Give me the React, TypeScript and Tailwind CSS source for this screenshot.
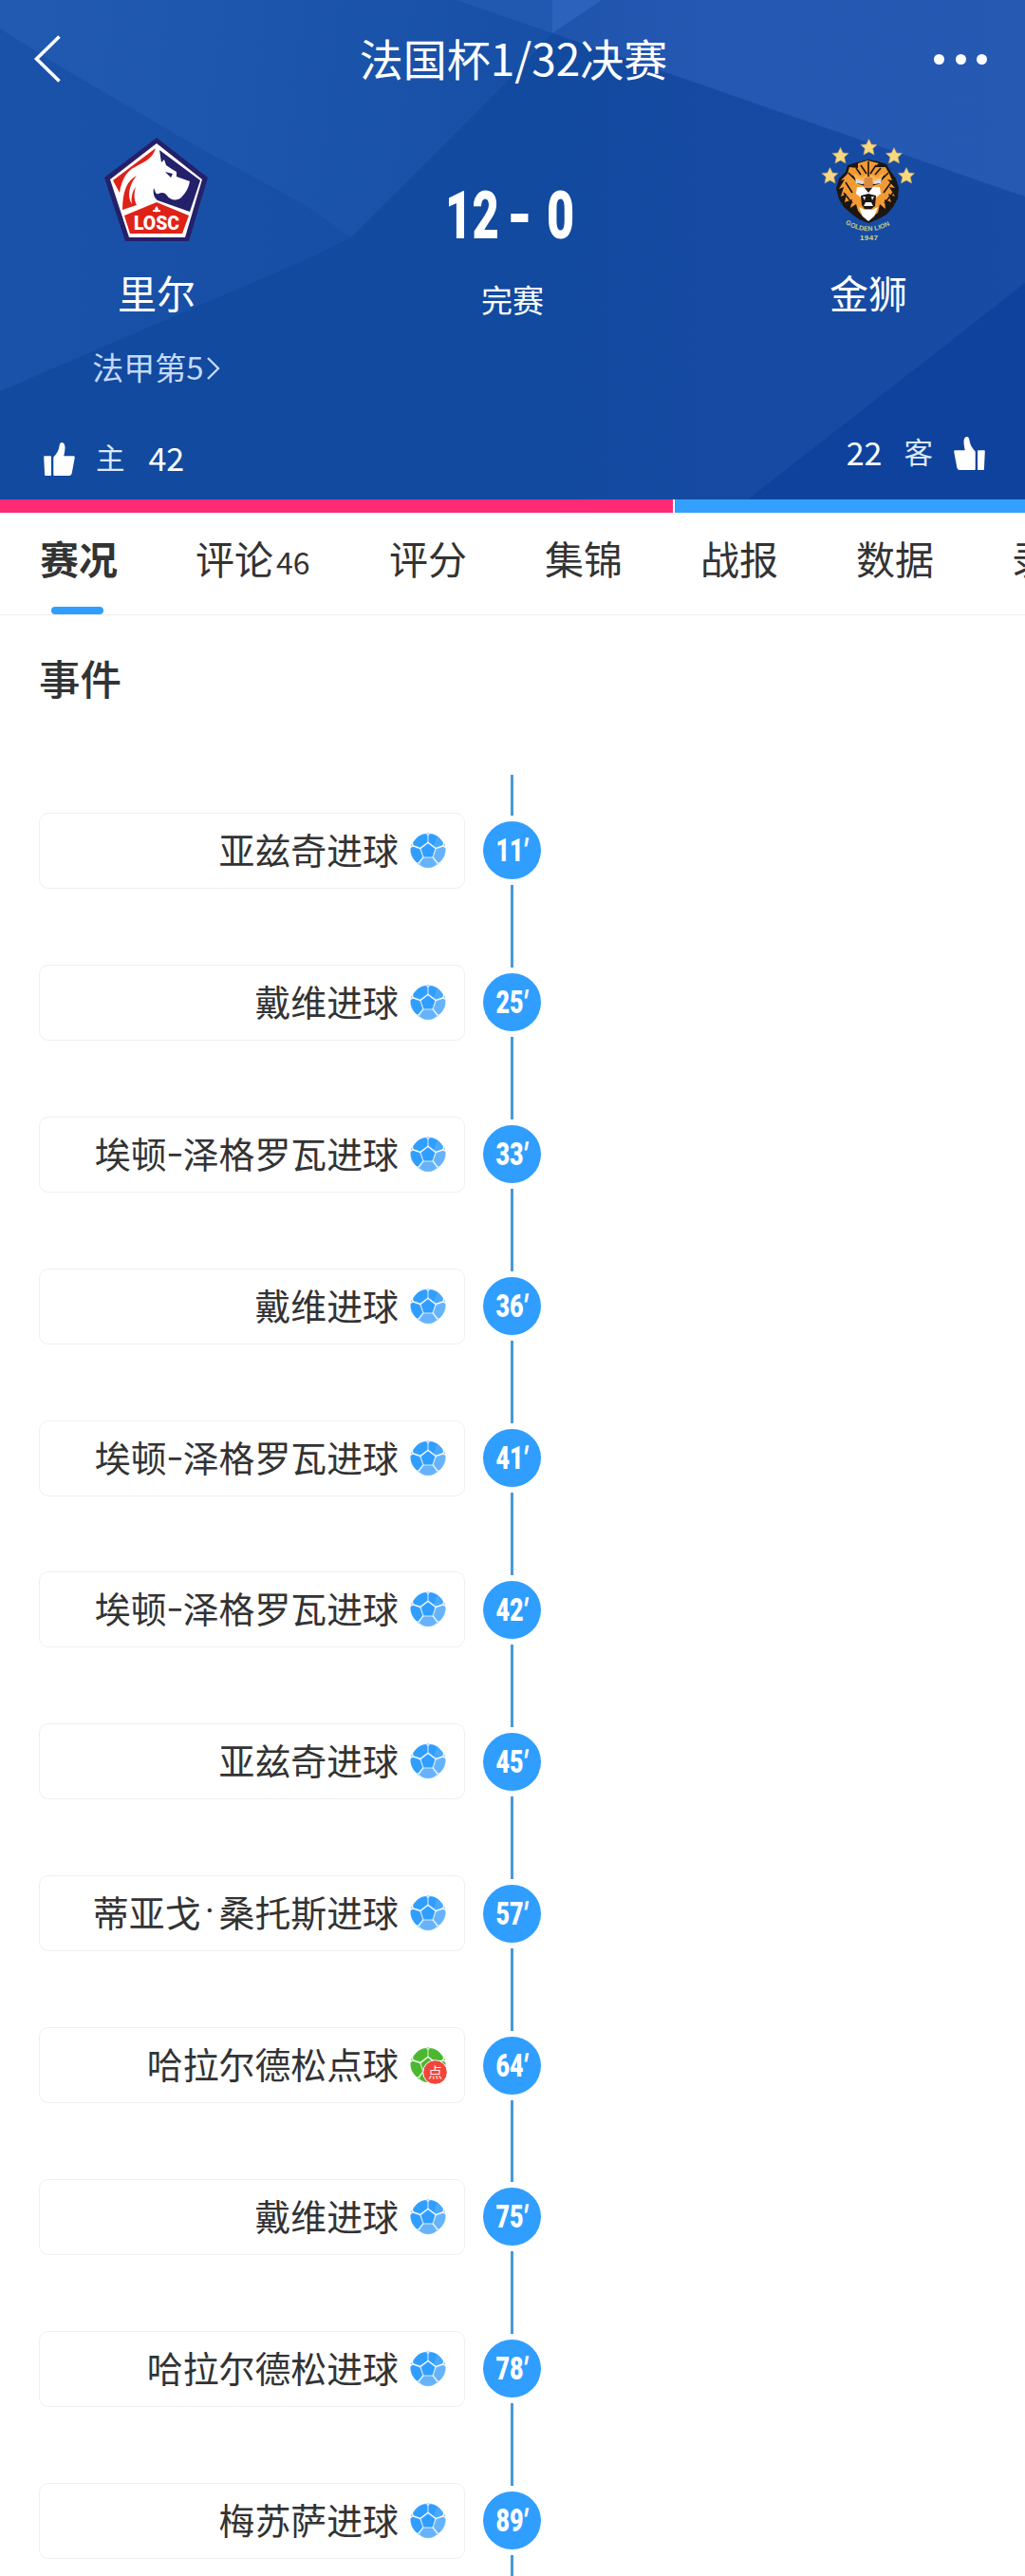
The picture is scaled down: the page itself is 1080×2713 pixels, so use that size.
import React from 'react';

interface MatchEvent {
  minute: number;
  text: string;
  penalty?: boolean;
}

const events: MatchEvent[] = [
  { minute: 11, text: '亚兹奇进球' },
  { minute: 25, text: '戴维进球' },
  { minute: 33, text: '埃顿-泽格罗瓦进球' },
  { minute: 36, text: '戴维进球' },
  { minute: 41, text: '埃顿-泽格罗瓦进球' },
  { minute: 42, text: '埃顿-泽格罗瓦进球' },
  { minute: 45, text: '亚兹奇进球' },
  { minute: 57, text: '蒂亚戈·桑托斯进球' },
  { minute: 64, text: '哈拉尔德松点球', penalty: true },
  { minute: 75, text: '戴维进球' },
  { minute: 78, text: '哈拉尔德松进球' },
  { minute: 89, text: '梅苏萨进球' },
];

const tabs = [
  { label: '赛况', active: true },
  { label: '评论', count: 46 },
  { label: '评分' },
  { label: '集锦' },
  { label: '战报' },
  { label: '数据' },
  { label: '录像' },
];

const HeaderBackdrop: React.FC = () => (
  <svg className="absolute inset-0 h-full w-full" viewBox="0 0 1080 526" preserveAspectRatio="none">
    <defs>
      <linearGradient id="left" gradientUnits="userSpaceOnUse" x1="0" y1="200" x2="540" y2="200">
        <stop offset="0" stopColor="#1a52a9" />
        <stop offset="0.6" stopColor="#184fa6" />
        <stop offset="1" stopColor="#164ea4" />
      </linearGradient>
      <linearGradient id="ray" gradientUnits="userSpaceOnUse" x1="0" y1="0" x2="520" y2="60">
        <stop offset="0" stopColor="#225ab1" />
        <stop offset="0.5" stopColor="#1d56ad" />
        <stop offset="1" stopColor="#1750a6" />
      </linearGradient>
      <linearGradient id="right" x1="0" y1="0" x2="1" y2="0">
        <stop offset="0" stopColor="#1f54ad" />
        <stop offset="0.4" stopColor="#2558b2" />
        <stop offset="1" stopColor="#2659b2" />
      </linearGradient>
      <linearGradient id="mid" x1="0" y1="0" x2="1" y2="0">
        <stop offset="0" stopColor="#114a9f" />
        <stop offset="0.3" stopColor="#164aa2" />
        <stop offset="1" stopColor="#174ba4" />
      </linearGradient>
    </defs>
    <rect width="1080" height="526" fill="#114a9f" />
    <path d="M0 0H582V35L530 90L370 250L330 270L0 412Z" fill="url(#left)" />
    <path d="M0 0H480L582 35L530 90L370 250L320 215L200 150L60 68L0 30Z" fill="url(#ray)" />
    <path d="M582 35L1080 205V300L790 526H570Z" fill="url(#mid)" />
    <path d="M1080 298V526H788Z" fill="#0f429c" />
    <path d="M582 35L632 0H1080V207Z" fill="url(#right)" />
    <path d="M480 0H582V35Z" fill="#2159b0" />
    <path d="M582 0H634L582 35Z" fill="#2d62bc" />
  </svg>
);

const LoscCrest: React.FC = () => (
  <svg className="h-[114px] w-[112px]" viewBox="109 144 112 114">
    <path d="M165 145L219 187L199 254H132L110 187Z" fill="#24206a" />
    <path d="M165 151L213 189L195 250H136L116 189Z" fill="#fff" />
    <path d="M164 156C161 168 150 171 142 176C132 181 128 191 126 203L119 190Z" fill="#df2218" />
    <path d="M144 185C134 190 129 201 129 221L144 216C141 210 141 204 143 197C139 202 138 209 139 215C133 206 137 193 144 185Z" fill="#df2218" />
    <path d="M168 158L211 190L200 223L166 211C162 208 161 203 162 198C164 202 164 205 167 204C171 202 174 203 176 206C179 211 187 212 191 208C196 203 199 197 200 191L186 186V181C181 178 178 176 175 174L173 168L170 171Z" fill="#24206a" />
    <path d="M174 181L182 183L180 187Z" fill="#24206a" />
    <path d="M131 227L165 213L199 227L192 246H137Z" fill="#df2218" />
    <path d="M165 217L167 220L165 224L163 220ZM161 221H169V223H161Z" fill="#fff" />
    <text x="165" y="242" textAnchor="middle" textLength="48" lengthAdjust="spacingAndGlyphs" className="fill-white font-['Roboto'] text-[20px] font-black">LOSC</text>
  </svg>
);

const STAR = 'M0-8.6L2.7-3L8.6-2.6L4.2 1.5L5.6 8L0 4.9L-5.6 8L-4.2 1.5L-8.6-2.6L-2.7-3Z';

const stars: [number, number][] = [
  [874.5, 185],
  [885.5, 164],
  [915.5, 155],
  [942, 164],
  [955, 185],
];

const LionCrest: React.FC = () => (
  <svg className="h-[114px] w-[112px]" viewBox="859 144 112 114">
    {stars.map(([x, y]) => (
      <path key={x} d={STAR} transform={`translate(${x} ${y})`} fill="#fbd77d" stroke="#b3a169" strokeWidth="0.6" />
    ))}
    <path d="M915 168L925 170L934 173L938 180L944 188L947 198L946 209L941 218L934 226L925 231L915 235L905 231L897 225L889 218L884 210L881 199L884 188L891 181L893 174L903 171Z" fill="#1c1613" />
    <path d="M904 172L914 169L926 172L921 176L933 176L937 183L940 190L935 189L943 198L937 197L943 207L936 204L939 213L932 210L933 220L927 215L925 224L920 228H909L904 222L902 215L896 219L898 210L890 213L892 204L886 207L889 197L884 199L890 189L886 190L893 183L895 176L904 177Z" fill="#f29a33" />
    <path d="M900 183L908 187L913 184L915 189L918 184L924 187L931 182L928 194L922 197H907L901 193Z" fill="#ffb350" />
    <path d="M898 185L904 193L911 195M932 185L926 193L919 195M907 174L913 183M923 174L917 183M915 170V186M891 192L898 203M939 192L931 203M889 203L898 214M941 203L932 214M902 177L907 184M928 177L922 184M894 182L900 188M936 182L930 188" fill="none" stroke="#1c1613" strokeWidth="1.6" />
    <path d="M901 188L910 191L909 194L902 193ZM929 188L920 191L921 194L928 193Z" fill="#d9dde2" />
    <path d="M911 187H919L920 198L915 203L910 198Z" fill="#d98a45" />
    <path d="M903 197L910 197L915 201L920 197L927 197L928 204L923 208H907L902 204Z" fill="#fff" />
    <path d="M911 198H919L915 203Z" fill="#2b211c" />
    <path d="M907 206L915 204L923 206L922 217L918 220H911L908 216Z" fill="#1c1613" />
    <path d="M909 207L911 211L912 207ZM921 207L919 211L918 207ZM910 217L912 213L918 213L920 217Z" fill="#f4f4f4" />
    <path d="M905 218L911 221H919L925 218L921 228L915 233L909 228Z" fill="#fff" />
    <path id="motto" d="M890.5 235.5Q915 251 940.5 235.5" fill="none" />
    <text className="fill-[#c7cd86] font-['Liberation_Sans'] text-[7px] font-bold">
      <textPath href="#motto" textLength="50">GOLDEN LION</textPath>
    </text>
    <text x="915.5" y="253" textAnchor="middle" textLength="19" className="fill-[#d3d584] font-['Liberation_Sans'] text-[8px] font-bold">1947</text>
  </svg>
);

const ThumbIcon: React.FC<{ className?: string }> = ({ className = '' }) => (
  <svg className={`h-[35px] w-[33px] fill-white ${className}`} viewBox="0 0 33 35">
    <path d="M1 14.3H7.2Q8 14.3 8 15.1V34.2Q8 35 7.2 35H1.9Q1.1 35 1.1 34.2L.2 15.1Q.2 14.3 1 14.3Z" />
    <path d="M10.3 34.2V15.4C13.5 12.5 15.8 9 16.6 3.6C16.8 1.3 17.6 0 19.2 0C21.3 0 22.5 2.3 22.5 5.2C22.5 8 21.9 11.1 21.2 14.2H31.6Q33 14.2 32.8 15.7L29.7 32.6Q29.2 35 27.3 35H11.1Q10.3 35 10.3 34.2Z" />
  </svg>
);

// the penalty ball is green and carries a red badge
const BallIcon: React.FC<{ penalty?: boolean }> = ({ penalty }) => {
  const dark = penalty ? '#4cb82f' : '#309eff';
  const light = penalty ? '#4cb82f' : '#66b3fb';
  return (
    <svg className="h-[40px] w-[40px]" viewBox="0 0 40 40">
      <g fill={dark} stroke={dark} strokeWidth="0.7">
        <path d="M20 12.6L27.1 17.9L24.5 26.2H15.5L12.9 17.9Z" />
        <path d="M19.2 4.4V10.8L11.8 16.3L5 14Q4 12.5 4.8 10.8Q9.5 3.2 17.8 2.3Q19.2 3 19.2 4.4Z" />
        <path d="M20.8 4.4V10.8L28.2 16.3L35 14Q36 12.5 35.2 10.8Q30.5 3.2 22.2 2.3Q20.8 3 20.8 4.4Z" />
        <path d="M4 16L11.3 18.4L14 26.6L9.8 32Q8.3 32.6 7 31.2Q1.2 25 1.9 17.6Q2.8 16 4 16Z" />
      </g>
      <path d="M29.5 4.9L35.6 11.5L34.8 14L28.4 16.2L26.2 14.6Z" fill={light} opacity="0.5" />
      <g fill={light} stroke={light} strokeWidth="0.7">
        <path d="M36 16L28.7 18.4L26 26.6L30.2 32Q31.7 32.6 33 31.2Q38.8 25 38.1 17.6Q37.2 16 36 16Z" />
        <path d="M15.3 27.8H24.7L28.6 33Q28.8 34.6 27.6 35.6Q20 40 12.4 35.6Q11.2 34.6 11.4 33Z" />
      </g>
      <path d="M18.5 1.6H21.5L20 2.8ZM2.4 13L3.8 14.1L2 15.3ZM37.6 13L36.2 14.1L38 15.3ZM8.6 33.5L10.4 33.3L10.9 35.3ZM31.4 33.5L29.6 33.3L29.1 35.3Z" fill={light} />
      {penalty && (
        <>
          <circle cx="27.5" cy="27.5" r="12.8" fill="#f2453a" stroke="#fff" strokeWidth="1" />
          <text x="27.5" y="33" textAnchor="middle" className="fill-[#ffe9e6] text-[15px]">点</text>
        </>
      )}
    </svg>
  );
};

// separators inside a name take a fixed width
const EventText: React.FC<{ text: string }> = ({ text }) => (
  <span className="relative -top-[2px] flex text-[37.9px] leading-[38px]">
    {text.split(/([-·])/).map((part, i) => {
      if (part === '-') {
        return <span key={i} className="w-[17px] -translate-y-[3px] scale-x-[1.35] text-center">-</span>;
      }
      if (part === '·') {
        return <span key={i} className="w-[19px] text-center font-['Roboto']">·</span>;
      }
      return <span key={i}>{part}</span>;
    })}
  </span>
);

const Header: React.FC = () => (
  <header className="relative h-[526px] overflow-hidden text-white">
    <HeaderBackdrop />
    <div className="relative flex h-full flex-col">
      <div className="flex h-[124px] items-center justify-between pl-[35px] pr-[40px]">
        <svg className="h-[52px] w-[58px]" viewBox="0 0 58 52" fill="none" stroke="white" strokeWidth="3.6">
          <path d="M27.5 2.5L3.5 26L27.5 49.5" />
        </svg>
        <h1 className="mb-[4px] ml-[5px] text-[46px] leading-none">法国杯1/32决赛</h1>
        <div className="flex gap-[11.5px]">
          <span className="size-[11px] rounded-full bg-white" />
          <span className="size-[11px] rounded-full bg-white" />
          <span className="size-[11px] rounded-full bg-white" />
        </div>
      </div>

      <div className="grid h-[310px] grid-cols-[330px_1fr_330px] pt-[20px]">
        <div className="flex flex-col items-center">
          <LoscCrest />
          <div className="mt-[29px] text-[41px] leading-[41px]">里尔</div>
          <div className="mt-[42px] flex items-center text-[33px] leading-[33px] text-[#c4d9fb]">
            法甲第5
            <svg className="ml-[2px] mt-[3px] h-[26px] w-[16px]" viewBox="0 0 16 26" fill="none" stroke="currentColor" strokeWidth="2.4">
              <path d="M2 2L13 13L2 24" />
            </svg>
          </div>
        </div>
        <div className="flex flex-col items-center pt-[48px]">
          <div className="flex pr-[3px] font-['Roboto'] text-[70px] font-black leading-[70px]">
            <span className="flex w-[49px] scale-x-[.7] justify-center">12</span>
            <span className="ml-[15px] flex w-[21px] scale-x-[.88] justify-center">-</span>
            <span className="ml-[19px] flex w-[27px] scale-x-[.72] justify-center">0</span>
          </div>
          <div className="mt-[37px] text-[33px] leading-[33px]">完赛</div>
        </div>
        <div className="flex flex-col items-center">
          <LionCrest />
          <div className="mt-[29px] text-[41px] leading-[41px]">金狮</div>
        </div>
      </div>

      <div className="flex flex-1 items-start justify-between pl-[46px] pr-[42px]">
        <div className="flex items-start pt-[32px]">
          <ThumbIcon />
          <span className="-mt-[2px] ml-[22px] text-[30.5px] leading-[35px] text-[#dbe8fc]">主</span>
          <span className="-mt-[2px] ml-[25px] text-[34px] leading-[35px]">42</span>
        </div>
        <div className="flex items-start pt-[26px]">
          <span className="-mt-[2px] mr-[23px] text-[34px] leading-[35px]">22</span>
          <span className="-mt-[2px] mr-[22px] text-[30.5px] leading-[35px] text-[#dbe8fc]">客</span>
          <ThumbIcon className="-scale-x-100" />
        </div>
      </div>
    </div>
  </header>
);

const App: React.FC = () => {
  return (
    <div className="h-[2713px] w-[1080px] overflow-hidden bg-white font-['Noto_Sans_CJK_SC',sans-serif] text-[#333]">
      <Header />

      <div className="flex h-[14px] gap-[2px]">
        <div className="w-[709px] bg-[#ff2a75]" />
        <div className="flex-1 bg-[#33a0ff]" />
      </div>

      <nav className="flex h-[108px] gap-[82px] overflow-hidden border-b border-[#eee] pl-[42px]">
        {tabs.map(tab => (
          <div key={tab.label} className="relative flex shrink-0 pt-[27px] text-[41px] leading-[41px]">
            <span className={tab.active ? 'font-bold' : ''}>{tab.label}</span>
            {tab.count && <span className="ml-[3px] w-[37px] text-[32px] leading-[48px]">{tab.count}</span>}
            {tab.active && <span className="absolute bottom-0 left-[12px] h-[8px] w-[55px] rounded-[4px] bg-[#309eff]" />}
          </div>
        ))}
      </nav>

      <h2 className="h-[168px] pl-[41px] pt-[44px] text-[43.5px] font-medium leading-[44px]">事件</h2>

      <ul>
        {events.map(event => (
          <li key={event.minute} className="flex h-[159.9px] items-center pl-[41px]">
            <div className="flex h-[80px] w-[449px] items-center justify-end rounded-[10px] border border-[#efefef] pr-[18px]">
              <EventText text={event.text} />
              <span className="ml-[11px]">
                <BallIcon penalty={event.penalty} />
              </span>
            </div>
            <div className="ml-[19px] flex h-full w-[61px] flex-col items-center gap-[6px]">
              <div className="w-[3px] flex-1 bg-[#4799dc]" />
              <div className="flex size-[61px] items-center justify-center rounded-full bg-[#309eff]">
                <span className="flex scale-x-[.76] whitespace-nowrap pr-[2px] font-['Roboto'] text-[33px] font-black leading-none text-white">
                  {event.minute}
                  <span className="-skew-x-12">′</span>
                </span>
              </div>
              <div className="w-[3px] flex-1 bg-[#4799dc]" />
            </div>
          </li>
        ))}
      </ul>
    </div>
  );
};

export default App;
